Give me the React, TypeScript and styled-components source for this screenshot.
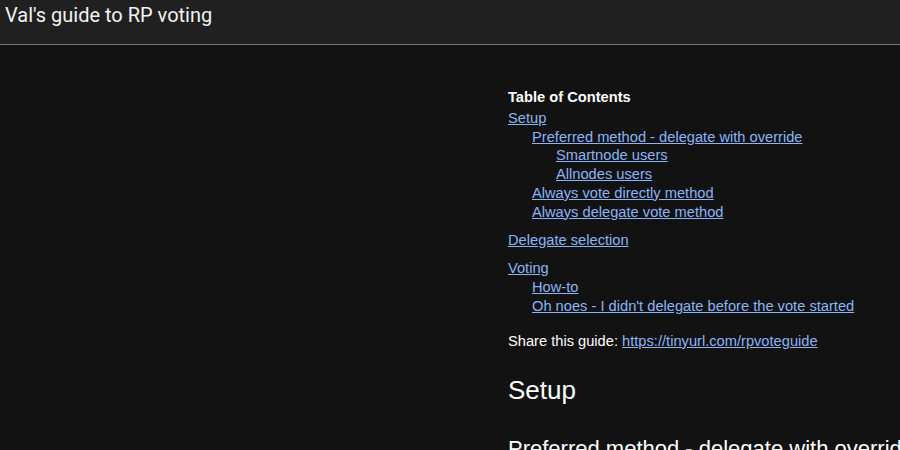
import React from "react";
import styled, { createGlobalStyle } from "styled-components";

const Global = createGlobalStyle`
  html, body { margin: 0; padding: 0; background: #121212; }
  body { font-family: "Liberation Sans", Arial, sans-serif; color: #ffffff; }
`;

const Header = styled.header`
  height: 44px;
  background: #202020;
  border-bottom: 1px solid #7a7a7a;
  padding: 0 5px;
  box-sizing: content-box;
`;

const Title = styled.h1`
  margin: 0;
  font-family: Roboto, "Liberation Sans", sans-serif;
  font-weight: 400;
  font-size: 20px;
  line-height: 30px;
  color: #f2f2f2;
`;

const Main = styled.main`
  padding: 43px 0 0 508px;
  font-size: 14.67px;
  line-height: 18.75px;
`;

const TocTitle = styled.div`
  font-weight: 700;
  margin-bottom: 2px;
`;

const Group = styled.div`
  margin-bottom: 9.5px;
`;

const Item = styled.div<{ $level: number }>`
  padding-left: ${(p) => p.$level * 24}px;
`;

const Link = styled.a`
  color: #8ab4f8;
  text-decoration: underline;
`;

const Share = styled.p`
  margin: 16.5px 0 0;
`;

const H2 = styled.h2`
  margin: 24.5px 0 0;
  font-size: 26px;
  font-weight: 400;
  line-height: 30px;
`;

const H3 = styled.h3`
  margin: 31px 0 0;
  font-size: 22px;
  font-weight: 400;
  line-height: 26px;
  white-space: nowrap;
`;

const groups: { text: string; level: number }[][] = [
  [
    { text: "Setup", level: 0 },
    { text: "Preferred method - delegate with override", level: 1 },
    { text: "Smartnode users", level: 2 },
    { text: "Allnodes users", level: 2 },
    { text: "Always vote directly method", level: 1 },
    { text: "Always delegate vote method", level: 1 },
  ],
  [{ text: "Delegate selection", level: 0 }],
  [
    { text: "Voting", level: 0 },
    { text: "How-to", level: 1 },
    { text: "Oh noes - I didn't delegate before the vote started", level: 1 },
  ],
];

export default function App() {
  return (
    <>
      <Global />
      <Header>
        <Title>Val's guide to RP voting</Title>
      </Header>
      <Main>
        <TocTitle>Table of Contents</TocTitle>
        {groups.map((g, i) => (
          <Group key={i}>
            {g.map((it) => (
              <Item key={it.text} $level={it.level}>
                <Link href="#">{it.text}</Link>
              </Item>
            ))}
          </Group>
        ))}
        <Share>
          Share this guide: <Link href="#">https://tinyurl.com/rpvoteguide</Link>
        </Share>
        <H2>Setup</H2>
        <H3>Preferred method - delegate with override</H3>
      </Main>
    </>
  );
}
